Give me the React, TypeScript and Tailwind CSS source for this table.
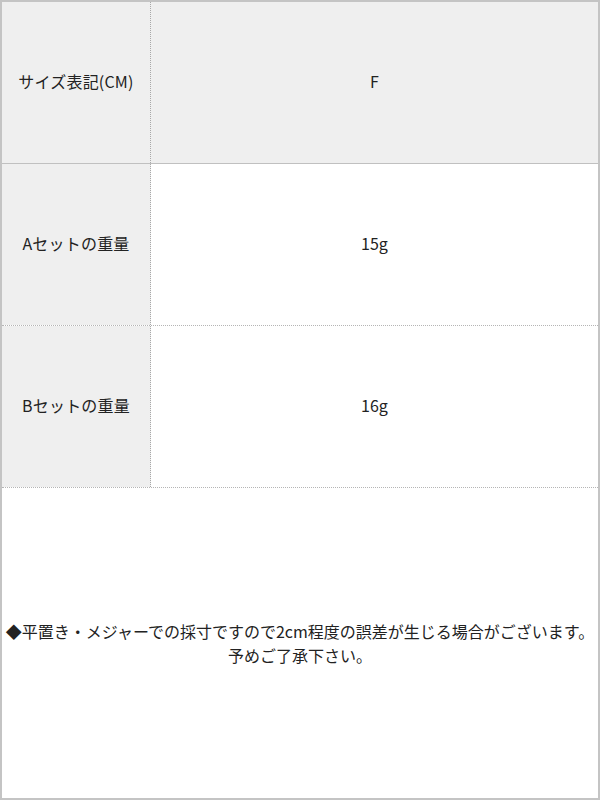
const ROWS = [
  { label: 'サイズ表記(CM)', value: 'F', head: true },
  { label: 'Aセットの重量', value: '15g', head: false },
  { label: 'Bセットの重量', value: '16g', head: false },
];

export default function App() {
  return (
    <div
      className="w-[600px] h-[800px] flex flex-col border-2 border-[#c4c4c4] bg-white text-[16px] text-[#222]"
      style={{ fontFamily: '"Noto Sans CJK JP", "Noto Sans", sans-serif' }}
    >
      {ROWS.map((row) => (
        <div
          key={row.label}
          className={`flex h-[162px] border-b ${
            row.head ? 'border-solid border-[#c0c0c0]' : 'border-dotted border-[#b5b5b5]'
          }`}
        >
          <div className="w-[149px] flex items-center justify-center pb-[3px] bg-[#efefef] border-r border-dotted border-[#a8a8a8] tracking-[0.2px]">
            {row.label}
          </div>
          <div
            className={`flex-1 flex items-center justify-center pb-[3px] ${
              row.head ? 'bg-[#efefef]' : 'bg-white'
            }`}
          >
            {row.value}
          </div>
        </div>
      ))}
      <div className="flex-1 flex items-center justify-center">
        <p className="text-center leading-[24px] whitespace-nowrap">
          ◆平置き・メジャーでの採寸ですので2cm程度の誤差が生じる場合がございます。
          <br />
          予めご了承下さい。
        </p>
      </div>
    </div>
  );
}
